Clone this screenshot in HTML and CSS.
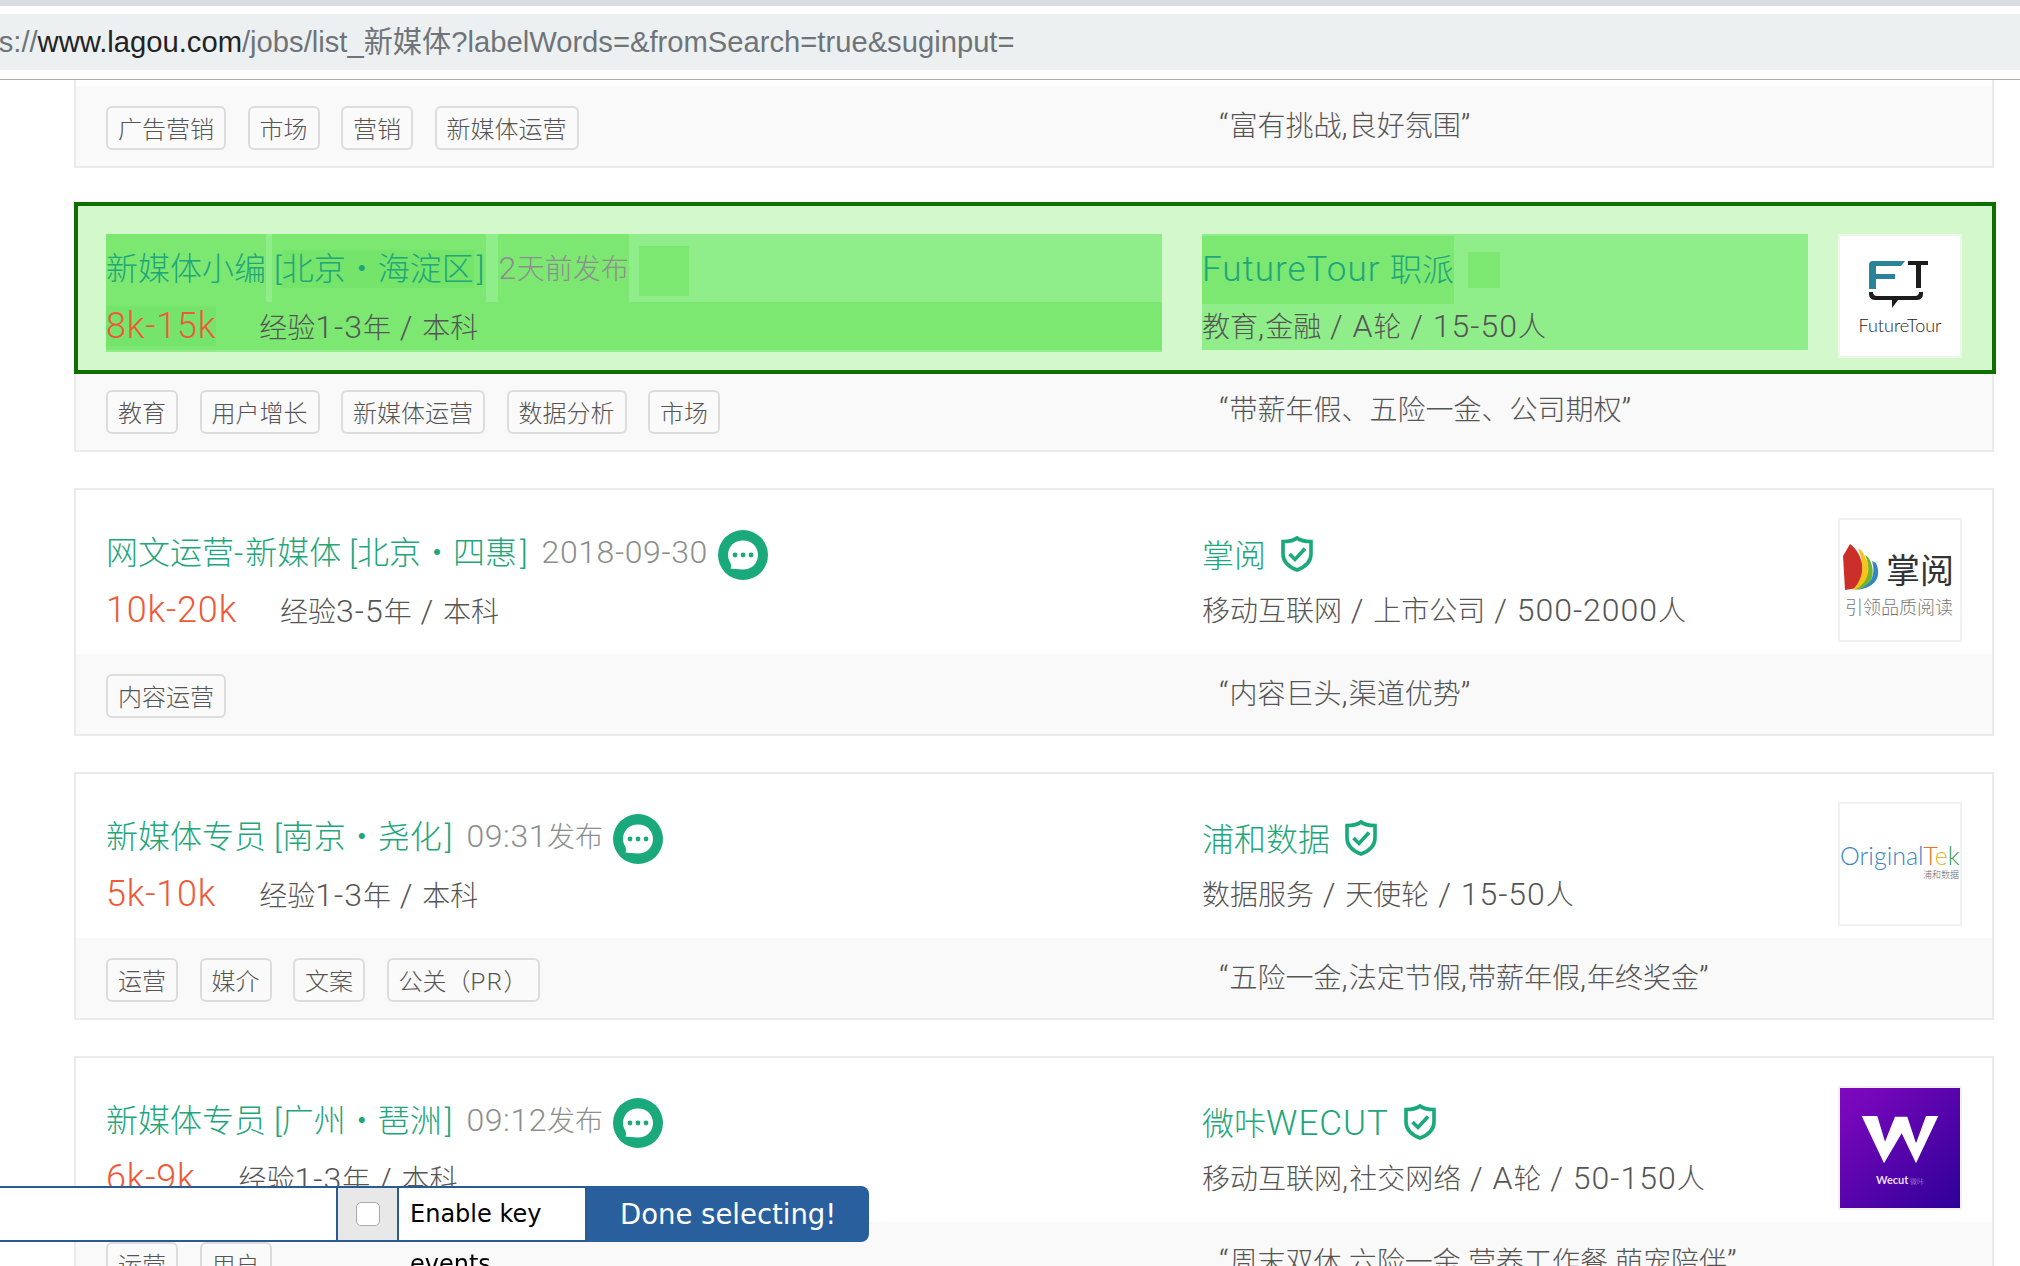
FILE: index.html
```html
<!DOCTYPE html>
<html lang="zh-CN">
<head>
    <meta charset="UTF-8">
    <title>新媒体招聘</title>
    <link rel="stylesheet" href="styles.css">
</head>
<body>
<div class="chrome">
    <div class="chrome-top"></div>
    <div class="url-bar">
        <span class="url-text">https://<b>www.lagou.com</b>/jobs/list_新媒体?labelWords=&amp;fromSearch=true&amp;suginput=</span>
    </div>
</div>

<div class="job-list">
    <!-- 第一条只露出底部 -->
    <div class="job-card">
        <div class="job-cut"></div>
        <div class="job-foot">
            <div class="tags">
                <span class="tag">广告营销</span>
                <span class="tag">市场</span>
                <span class="tag">营销</span>
                <span class="tag">新媒体运营</span>
            </div>
            <div class="quote"><i class="lat">“</i>富有挑战<i class="lat">,</i>良好氛围<i class="lat">”</i></div>
        </div>
    </div>

    <!-- 被选中的一条 -->
    <div class="job-card">
        <div class="job-main picked">
            <div class="job-left">
                <div class="title-row">
                    <span class="job-name">新媒体小编</span>
                    <span class="job-add">[<em>北京・海淀区</em>]</span>
                    <span class="job-time">2<small>天前发布</small></span>
                    <span class="chat-slot"></span>
                </div>
                <div class="info-row">
                    <span class="salary">8k-15k</span>
                    <span class="meta">经验<i class="lat">1-3</i>年<i class="lat"> / </i>本科</span>
                </div>
            </div>
            <div class="job-mid">
                <div class="company-row">
                    <span class="company"><i>FutureTour </i>职派</span>
                    <span class="shield-slot"></span>
                </div>
                <div class="meta company-meta">教育<i class="lat">,</i>金融<i class="lat"> / A</i>轮<i class="lat"> / 15-50</i>人</div>
            </div>
            <div class="logo">
                <svg viewBox="0 0 120 120" width="120" height="120">
                    <path d="M29 38 V29 Q29 25 33 25 H65 L61 30 H36 V38 Z" fill="#2a8398"/>
                    <rect x="29" y="37" width="7" height="16" fill="#2a8398"/>
                    <rect x="29" y="38" width="26" height="5" fill="#2a8398"/>
                    <rect x="68" y="25" width="20" height="4" fill="#1c1c1c"/>
                    <rect x="76" y="25" width="5" height="27" fill="#1c1c1c"/>
                    <path d="M29 56 H33 Q33 60 37 60 H75 Q79 60 79 56 H83 V58 Q83 64 76 64 H58 L52 72 V64 H36 Q29 64 29 58 Z" fill="#1c1c1c"/>
                    <text x="60" y="96" text-anchor="middle" class="ft-name">FutureTour</text>
                </svg>
            </div>
        </div>
        <div class="job-foot">
            <div class="tags">
                <span class="tag">教育</span>
                <span class="tag">用户增长</span>
                <span class="tag">新媒体运营</span>
                <span class="tag">数据分析</span>
                <span class="tag">市场</span>
            </div>
            <div class="quote"><i class="lat">“</i>带薪年假、五险一金、公司期权<i class="lat">”</i></div>
        </div>
    </div>

    <div class="job-card">
        <div class="job-main">
            <div class="job-left">
                <div class="title-row">
                    <span class="job-name">网文运营<i class="dash">-</i>新媒体</span>
                    <span class="job-add">[<em>北京・四惠</em>]</span>
                    <span class="job-time">2018-09-30</span>
                    <svg class="chat" viewBox="0 0 50 50" width="50" height="50">
                        <circle cx="25" cy="25" r="25" fill="#1aa97a"/>
                        <path d="M25 10.5 C33.5 10.5 40 16.5 40 25 C40 33.5 33.5 39.5 25 39.5 C20 39.5 15 38.5 12.5 38.5 C13.5 36.5 13 34.5 12.5 33 C11 30.5 10 28 10 25 C10 16.5 16.5 10.5 25 10.5 Z" fill="#fff"/>
                        <circle cx="17" cy="25" r="2.4" fill="#1aa97a"/>
                        <circle cx="25" cy="25" r="2.4" fill="#1aa97a"/>
                        <circle cx="33" cy="25" r="2.4" fill="#1aa97a"/>
                    </svg>
                </div>
                <div class="info-row">
                    <span class="salary">10k-20k</span>
                    <span class="meta">经验<i class="lat">3-5</i>年<i class="lat"> / </i>本科</span>
                </div>
            </div>
            <div class="job-mid">
                <div class="company-row">
                    <span class="company">掌阅</span>
                    <svg class="shield" viewBox="0 0 34 36" width="34" height="36">
                        <path d="M17 2 C20 4.5 25 5.5 31 5.5 V18 C31 26 25 31 17 34 C9 31 3 26 3 18 V5.5 C9 5.5 14 4.5 17 2 Z" fill="none" stroke="#1aa97a" stroke-width="3.6"/>
                        <path d="M9.5 18 L15 23.5 L25 12.5" fill="none" stroke="#1aa97a" stroke-width="3.6"/>
                    </svg>
                </div>
                <div class="meta company-meta">移动互联网<i class="lat"> / </i>上市公司<i class="lat"> / 500-2000</i>人</div>
            </div>
            <div class="logo">
                <svg viewBox="0 0 120 120" width="120" height="120">
                    <path d="M10 24 L3 36 L5 70 L18 68 C26 56 24 34 10 24 Z" fill="#cb2f2a"/>
                    <path d="M21 30 C30 42 32 58 22 68 L12 70 C22 62 26 46 18 29 Z" fill="#f6c21c"/>
                    <path d="M28 37 C34 46 36 60 24 68 L14 70 C28 64 32 50 25 35 Z" fill="#74b52c"/>
                    <path d="M36 43 C42 56 36 68 16 70 C32 66 36 54 32 41 Z" fill="#2f86c9"/>
                    <text x="46" y="63" class="zy-name">掌阅</text>
                    <text x="5" y="94" class="zy-sub">引领品质阅读</text>
                </svg>
            </div>
        </div>
        <div class="job-foot">
            <div class="tags">
                <span class="tag">内容运营</span>
            </div>
            <div class="quote"><i class="lat">“</i>内容巨头<i class="lat">,</i>渠道优势<i class="lat">”</i></div>
        </div>
    </div>

    <div class="job-card">
        <div class="job-main">
            <div class="job-left">
                <div class="title-row">
                    <span class="job-name">新媒体专员</span>
                    <span class="job-add">[<em>南京・尧化</em>]</span>
                    <span class="job-time">09:31<small>发布</small></span>
                    <svg class="chat" viewBox="0 0 50 50" width="50" height="50">
                        <circle cx="25" cy="25" r="25" fill="#1aa97a"/>
                        <path d="M25 10.5 C33.5 10.5 40 16.5 40 25 C40 33.5 33.5 39.5 25 39.5 C20 39.5 15 38.5 12.5 38.5 C13.5 36.5 13 34.5 12.5 33 C11 30.5 10 28 10 25 C10 16.5 16.5 10.5 25 10.5 Z" fill="#fff"/>
                        <circle cx="17" cy="25" r="2.4" fill="#1aa97a"/>
                        <circle cx="25" cy="25" r="2.4" fill="#1aa97a"/>
                        <circle cx="33" cy="25" r="2.4" fill="#1aa97a"/>
                    </svg>
                </div>
                <div class="info-row">
                    <span class="salary">5k-10k</span>
                    <span class="meta">经验<i class="lat">1-3</i>年<i class="lat"> / </i>本科</span>
                </div>
            </div>
            <div class="job-mid">
                <div class="company-row">
                    <span class="company">浦和数据</span>
                    <svg class="shield" viewBox="0 0 34 36" width="34" height="36">
                        <path d="M17 2 C20 4.5 25 5.5 31 5.5 V18 C31 26 25 31 17 34 C9 31 3 26 3 18 V5.5 C9 5.5 14 4.5 17 2 Z" fill="none" stroke="#1aa97a" stroke-width="3.6"/>
                        <path d="M9.5 18 L15 23.5 L25 12.5" fill="none" stroke="#1aa97a" stroke-width="3.6"/>
                    </svg>
                </div>
                <div class="meta company-meta">数据服务<i class="lat"> / </i>天使轮<i class="lat"> / 15-50</i>人</div>
            </div>
            <div class="logo">
                <svg viewBox="0 0 120 120" width="120" height="120">
                    <text x="0" y="61" class="ot-name"><tspan fill="#3a85c8">Original</tspan><tspan fill="#e8742c">T</tspan><tspan fill="#e9b52a">e</tspan><tspan fill="#2f9e55">k</tspan></text>
                    <text x="119" y="74" text-anchor="end" class="ot-sub">浦和数据</text>
                </svg>
            </div>
        </div>
        <div class="job-foot">
            <div class="tags">
                <span class="tag">运营</span>
                <span class="tag">媒介</span>
                <span class="tag">文案</span>
                <span class="tag">公关（<i class="tag-lat">PR</i>）</span>
            </div>
            <div class="quote"><i class="lat">“</i>五险一金<i class="lat">,</i>法定节假<i class="lat">,</i>带薪年假<i class="lat">,</i>年终奖金<i class="lat">”</i></div>
        </div>
    </div>

    <div class="job-card">
        <div class="job-main">
            <div class="job-left">
                <div class="title-row">
                    <span class="job-name">新媒体专员</span>
                    <span class="job-add">[<em>广州・琶洲</em>]</span>
                    <span class="job-time">09:12<small>发布</small></span>
                    <svg class="chat" viewBox="0 0 50 50" width="50" height="50">
                        <circle cx="25" cy="25" r="25" fill="#1aa97a"/>
                        <path d="M25 10.5 C33.5 10.5 40 16.5 40 25 C40 33.5 33.5 39.5 25 39.5 C20 39.5 15 38.5 12.5 38.5 C13.5 36.5 13 34.5 12.5 33 C11 30.5 10 28 10 25 C10 16.5 16.5 10.5 25 10.5 Z" fill="#fff"/>
                        <circle cx="17" cy="25" r="2.4" fill="#1aa97a"/>
                        <circle cx="25" cy="25" r="2.4" fill="#1aa97a"/>
                        <circle cx="33" cy="25" r="2.4" fill="#1aa97a"/>
                    </svg>
                </div>
                <div class="info-row">
                    <span class="salary">6k-9k</span>
                    <span class="meta">经验<i class="lat">1-3</i>年<i class="lat"> / </i>本科</span>
                </div>
            </div>
            <div class="job-mid">
                <div class="company-row">
                    <span class="company">微咔<i>WECUT</i></span>
                    <svg class="shield" viewBox="0 0 34 36" width="34" height="36">
                        <path d="M17 2 C20 4.5 25 5.5 31 5.5 V18 C31 26 25 31 17 34 C9 31 3 26 3 18 V5.5 C9 5.5 14 4.5 17 2 Z" fill="none" stroke="#1aa97a" stroke-width="3.6"/>
                        <path d="M9.5 18 L15 23.5 L25 12.5" fill="none" stroke="#1aa97a" stroke-width="3.6"/>
                    </svg>
                </div>
                <div class="meta company-meta">移动互联网<i class="lat">,</i>社交网络<i class="lat"> / A</i>轮<i class="lat"> / 50-150</i>人</div>
            </div>
            <div class="logo">
                <svg viewBox="0 0 120 120" width="120" height="120">
                    <defs>
                        <linearGradient id="wecutBg" x1="0" y1="0" x2="1" y2="1">
                            <stop offset="0" stop-color="#8208c0"/>
                            <stop offset="1" stop-color="#2e0098"/>
                        </linearGradient>
                    </defs>
                    <rect width="120" height="120" fill="url(#wecutBg)"/>
                    <path d="M21.7 28 H37.3 L45 53.7 L55 28.7 H67.3 L76 55.3 L86 28 H98.3 L76 75.3 L61.7 45.3 L44 75.3 Z" fill="#fff"/>
                    <text x="36" y="96" class="wc-name">Wecut</text>
                    <text x="70" y="96" class="wc-sub">微咔</text>
                </svg>
            </div>
        </div>
        <div class="job-foot">
            <div class="tags">
                <span class="tag">运营</span>
                <span class="tag">用户</span>
            </div>
            <div class="quote"><i class="lat">“</i>周末双休<i class="lat">,</i>六险一金<i class="lat">,</i>营养工作餐<i class="lat">,</i>萌宠陪伴<i class="lat">”</i></div>
        </div>
    </div>
</div>

<!-- 选择器工具条 -->
<div class="gadget">
    <div class="gadget-input"></div>
    <div class="gadget-check"><input type="checkbox"></div>
    <div class="gadget-label">Enable key</div>
    <div class="gadget-btn">Done selecting!</div>
    <div class="gadget-sub">events</div>
</div>
</body>
</html>
```

FILE: styles.css
```css
* {
    margin: 0;
    padding: 0;
    box-sizing: border-box;
}

html, body {
    height: 100%;
    overflow: hidden;
}

body {
    background: #fff;
    font-family: Roboto, "Noto Sans CJK SC", sans-serif;
    font-weight: 300;
}

/* 浏览器地址栏 */
.chrome {
    height: 80px;
    border-bottom: 1px solid #aaa;
    background: #fff;
}

.chrome-top {
    height: 6px;
    background: #d9dce3;
}

.url-bar {
    height: 56px;
    margin-top: 8px;
    background: #ecf0f1;
    overflow: hidden;
    line-height: 56px;
    white-space: nowrap;
}

.url-text {
    display: block;
    margin-left: -50px;
    font-family: "Liberation Sans", "Noto Sans CJK SC", sans-serif;
    font-weight: 400;
    font-size: 29.2px;
    color: #6f7478;
}

.url-text b {
    font-weight: 400;
    color: #222;
}

/* 职位列表 */
.job-list {
    display: flex;
    flex-direction: column;
    gap: 36px;
    margin: 0 26px 0 74px;
}

.job-card {
    flex: none;
    border: 2px solid #eaeaea;
    background: #fff;
}

.job-card:first-child {
    border-top: 0;
}

.job-cut {
    height: 6px;
}

.job-main {
    display: flex;
    height: 164px;
    padding: 28px 30px 0 30px;
}

.job-left {
    flex: none;
    width: 1056px;
    height: 118px;
}

.title-row {
    display: flex;
    align-items: center;
    height: 68px;
    white-space: nowrap;
}

.job-name, .job-add, .company {
    font-size: 32px;
    color: #1fa67b;
}

.job-name {
    height: 68px;
    line-height: 70px;
}

.dash {
    font-style: normal;
    letter-spacing: 2px;
}

.job-add {
    height: 68px;
    margin-left: 6px;
    padding: 0 2px;
    line-height: 70px;
}

.job-add em {
    margin-right: 3px;
    font-style: normal;
}

.job-time {
    height: 68px;
    margin-left: 12px;
    line-height: 68px;
    font-size: 32px;
    letter-spacing: .6px;
    color: #8e8e8e;
}

.job-time small {
    font-size: 28px;
    letter-spacing: 0;
}

.chat {
    flex: none;
    margin: 6px 0 0 10px;
}

.chat-slot {
    flex: none;
    width: 50px;
    height: 50px;
    margin: 6px 0 0 10px;
}

.info-row {
    display: flex;
    align-items: center;
    height: 48px;
    white-space: nowrap;
}

.salary {
    margin-right: 43px;
    font-size: 36px;
    line-height: 40px;
    letter-spacing: .8px;
    color: #ee5a38;
}

.meta {
    font-size: 28px;
    color: #555;
}

/* 英文数字比中文大一点 */
.lat {
    font-style: normal;
    font-size: 32px;
    letter-spacing: 1px;
}

.job-mid {
    flex: none;
    width: 606px;
    height: 116px;
    margin-left: 40px;
    padding-top: 2px;
}

.company-row {
    display: flex;
    align-items: center;
    height: 68px;
    white-space: nowrap;
}

.company {
    margin-bottom: 3px;
}

.company i {
    font-style: normal;
    font-size: 35px;
    letter-spacing: 1px;
}

.shield {
    flex: none;
    margin-left: 14px;
}

.shield-slot {
    flex: none;
    width: 32px;
    height: 36px;
    margin-left: 14px;
}

.company-meta {
    height: 46px;
    line-height: 45px;
    white-space: nowrap;
}

.logo {
    flex: none;
    width: 124px;
    height: 124px;
    margin-left: 30px;
    border: 2px solid #f1f1f1;
    background: #fff;
}

.logo svg {
    display: block;
}

.ft-name {
    font-family: Lato, sans-serif;
    font-size: 18px;
    font-weight: 300;
    fill: #222;
}

.zy-name {
    font-family: "Noto Sans CJK SC", sans-serif;
    font-size: 34px;
    font-weight: 400;
    fill: #333;
}

.zy-sub {
    font-family: "Noto Sans CJK SC", sans-serif;
    font-size: 18px;
    font-weight: 300;
    fill: #777;
}

.ot-name {
    font-family: Lato, sans-serif;
    font-size: 25px;
    font-weight: 300;
}

.ot-sub {
    font-family: "Noto Sans CJK SC", sans-serif;
    font-size: 9px;
    fill: #666;
}

.wc-name {
    font-family: Lato, sans-serif;
    font-size: 11px;
    font-weight: 700;
    fill: #eadcf6;
}

.wc-sub {
    font-family: "Noto Sans CJK SC", sans-serif;
    font-size: 7px;
    fill: #b9a0dd;
}

/* 选中状态 */
.picked {
    margin: 0 0 0 2px;
    padding: 28px 30px 0 28px;
    outline: 4px solid #0e6e00;
    background: #d3f8cc;
}

.picked .job-left, .picked .job-mid {
    background: #90ee8a;
}

.picked .job-name, .picked .job-add, .picked .job-time,
.picked .chat-slot, .picked .info-row, .picked .shield-slot,
.picked .company {
    background: #7ce872;
}

.picked .job-add em, .picked .salary {
    background: #74e56a;
}

.picked .company {
    height: 68px;
    margin-bottom: 0;
    line-height: 68px;
}

.picked .job-mid {
    padding-top: 0;
}

.picked .company-row {
    margin-top: 2px;
}

.picked .logo {
    border-color: #e9f9e4;
}

/* 底部标签 */
.job-foot {
    display: flex;
    height: 80px;
    padding: 20px 0 0 30px;
    background: #f9f9f9;
}

.tags {
    flex: none;
    display: flex;
    gap: 21.5px;
    width: 1113px;
}

.tag {
    height: 44px;
    padding: 0 10px;
    border: 2px solid #dcdcdc;
    border-radius: 6px;
    font-size: 24px;
    line-height: 44px;
    color: #555;
    background: #fafafa;
}

.tag-lat {
    font-style: normal;
    letter-spacing: 1.5px;
}

.quote {
    font-size: 28px;
    line-height: 38px;
    color: #555;
    white-space: nowrap;
}

/* 选择器工具条 */
.gadget {
    position: fixed;
    left: 0;
    bottom: 24px;
    display: flex;
    width: 869px;
    height: 56px;
    font-family: "DejaVu Sans", sans-serif;
    font-weight: 400;
    font-size: 24px;
}

.gadget-input, .gadget-check, .gadget-label {
    border-top: 2px solid #2a5a92;
    border-bottom: 2px solid #2a5a92;
    border-right: 2px solid #2a5a92;
}

.gadget-input {
    width: 338px;
    background: #fff;
}

.gadget-check {
    display: flex;
    align-items: center;
    justify-content: center;
    width: 61px;
    background: #e8e8e8;
}

.gadget-check input {
    appearance: none;
    width: 24px;
    height: 24px;
    border: 1px solid #aaa;
    border-radius: 5px;
    background: #fff;
}

.gadget-label {
    width: 188px;
    padding-left: 11px;
    line-height: 52px;
    color: #000;
    background: #fff;
}

.gadget-btn {
    width: 282px;
    padding-left: 33px;
    border-radius: 0 8px 8px 0;
    font-size: 27.5px;
    line-height: 56px;
    color: #fff;
    background: #2a5f9e;
}

.gadget-sub {
    position: absolute;
    left: 410px;
    top: 100%;
    line-height: 44px;
    color: #000;
}
```
